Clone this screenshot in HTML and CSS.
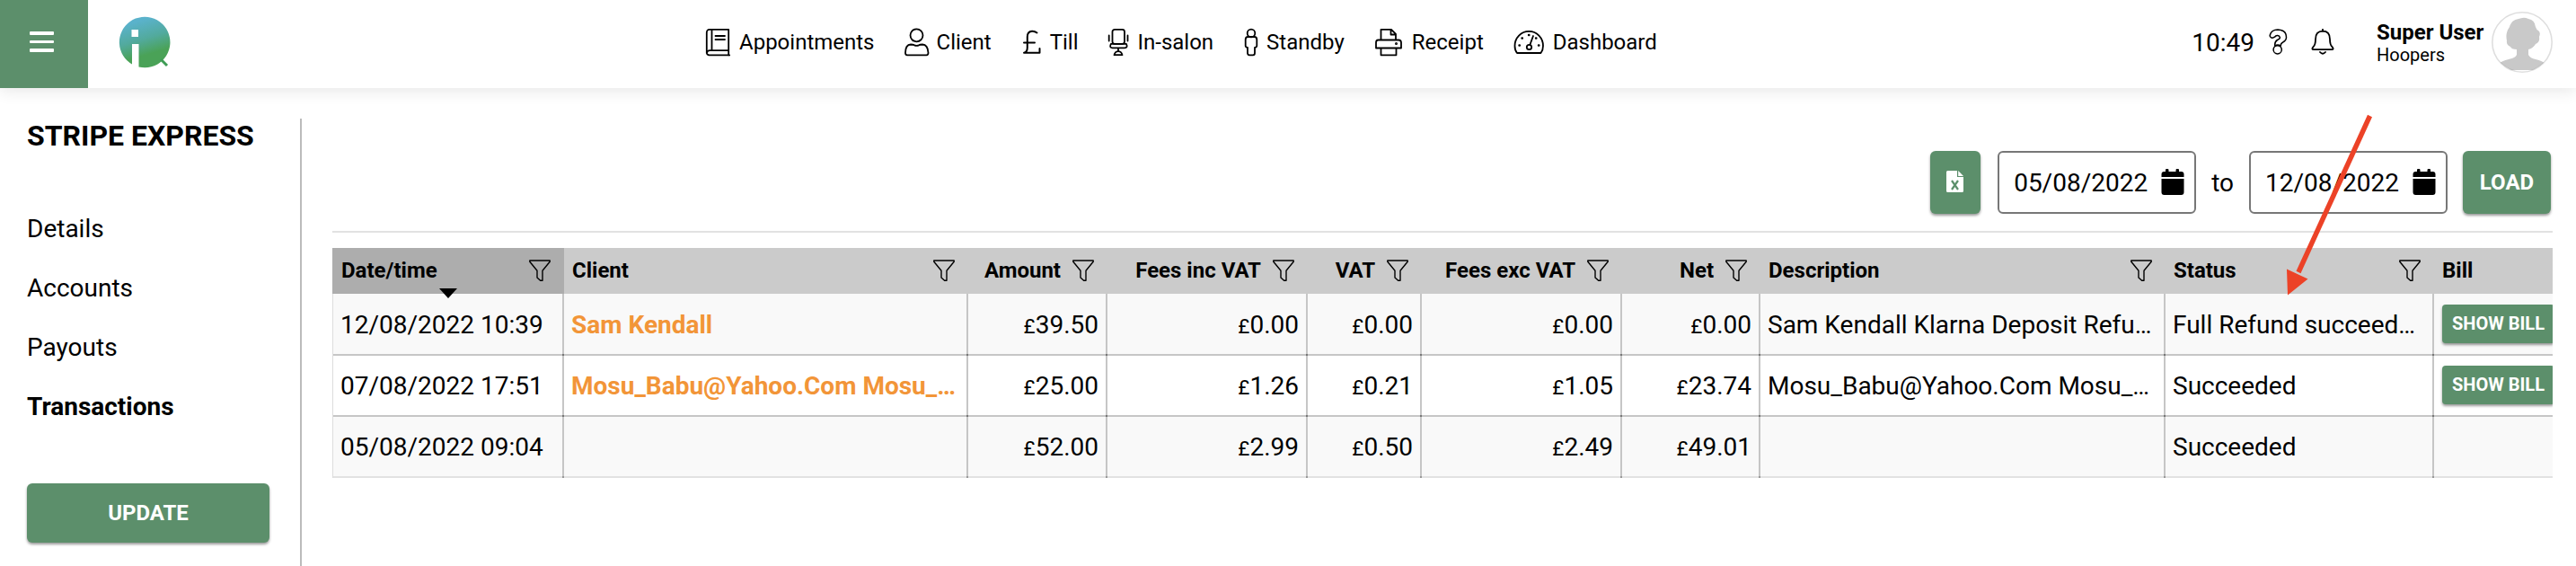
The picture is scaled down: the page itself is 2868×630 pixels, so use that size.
FILE: index.html
```html
<!DOCTYPE html>
<html lang="en">
<head>
  <meta charset="UTF-8" />
  <meta name="viewport" content="width=device-width, initial-scale=1.0"/>
  <title>Stripe Express - Transactions</title>
  <link rel="stylesheet" href="styles.css">
</head>
<body>
  <!-- shared icons -->
  <svg class="defs">
    <symbol id="filter" viewBox="0 0 24 24">
      <path d="M.8 1h22.400v1.200L15 12.200v11H12.600L9 20v-7.800L.8 2.200z" fill="none" stroke="#000" stroke-width="1.400" stroke-linejoin="round"/>
    </symbol>
    <symbol id="calendar" viewBox="0 0 26 30">
      <path d="M5 3V1.500a1.500 1.500 0 0 1 3.500 0V3h8V1.500a1.500 1.500 0 0 1 3.500 0V3h2.500q3 0 3 3v3H.5V6q0-3 3-3zM.5 11h25v15q0 3-3 3h-19q-3 0-3-3z"/>
    </symbol>
  </svg>

  <header class="topbar">
    <button class="menu"><span></span><span></span><span></span></button>
    <svg class="logo" viewBox="0 0 60 60">
      <defs>
        <linearGradient id="logoFill" x1=".3" y1="0" x2=".6" y2="1">
          <stop offset=".1" stop-color="#5ab2cb"/>
          <stop offset=".45" stop-color="#52aa9d"/>
          <stop offset=".75" stop-color="#4aa257"/>
        </linearGradient>
      </defs>
      <path d="M17 54.500A28.300 28.300 0 1 1 24.500 57.500V32H17z" fill="url(#logoFill)"/>
      <rect x="16.500" y="16" width="7.500" height="8" fill="#fff"/>
      <path d="M49 49l7 7" stroke="#3f9c55" stroke-width="3"/>
    </svg>

    <nav class="nav">
      <a><svg width="30" height="34" viewBox="0 0 30 34"><path d="M5 2.800h21.200v23.400H6a3.800 3.800 0 0 0-4.200 3V6.500Q1.800 2.800 5 2.800zM7.500 3v23M26.200 26.500v5M27.200 31.400H6q-4.200 0-4.200-3M11.500 10h10.500M11.500 14h10.500"/></svg>Appointments</a>
      <a><svg width="29" height="34" viewBox="0 0 29 34"><circle cx="14.500" cy="9.300" r="7"/><path d="M4 31.300q-2 0-2-2.500 0-9 6-9.300 3 0 4 .8 2.500 1 5 0 1-.8 4-.8 6 .3 6.500 9.300 0 2.500-2 2.500z"/></svg>Client</a>
      <a><svg width="25" height="34" viewBox="0 0 25 34"><path d="M18.500 6.500Q16 4.500 13 4.700 7.800 5 7.800 11v12q0 5-3.800 5.700h17.500V24M4 17.500h12" stroke-width="2"/></svg>Till</a>
      <a><svg width="26" height="34" viewBox="0 0 26 34"><rect x="6.500" y="2.800" width="13.500" height="16" rx="2.500"/><path d="M5 18.800h17q2 4.500-2 4.500H6.500q-4-.3-1.500-4.500zM2.700 9.500v6M23.500 9.500v6M13 23.500v3.500M8.500 31.200q1-4 4.500-4t4.500 4z"/></svg>In-salon</a>
      <a><svg width="19" height="34" viewBox="0 0 19 34"><circle cx="10" cy="7" r="4.300"/><path d="M6.500 11h7q2.800 0 2.800 3v7q0 1.500-2.300 2v6q0 2.300-2 2.300H8q-2 0-2-2.300v-6q-2.300-.5-2.300-2v-7q0-3 2.800-3z"/></svg>Standby</a>
      <a><svg width="35" height="34" viewBox="0 0 35 34"><path d="M8.500 14V2.800h11.500l5 5V14M19.500 3v5.500H25M5.500 14.500h22.500q3 0 3 3v6H3v-6q0-3 2.500-3zM8.500 24v7.300h17V24"/><circle cx="25.500" cy="18.500" r=".6"/></svg>Receipt</a>
      <a><svg width="37" height="34" viewBox="0 0 37 34"><path d="M5 29Q2.500 26 2.500 21A15.600 16 0 0 1 34 21q0 5-2.500 8zM19.500 19.500L23 10"/><circle cx="18.500" cy="22.500" r="2.700"/><path class="dots" d="M7.500 20.500h.4M10.500 12.500h.4M18 9h.4M26 12.500h.4M29 20.500h.4"/></svg>Dashboard</a>
    </nav>

    <div class="tools">
      <span class="clock">10:49</span>
      <svg class="help" width="22" height="30" viewBox="0 0 22 30"><path d="M2.300 7Q4 1 11 1q9.500.3 9.500 8.500 0 3.500-3.800 5.500-2.700 1.300-2.400 4-3.500-2-6.500 0-.6-4.500 2.700-6.500 3.200-1.300 2.900-2.900-.6-2.300-3-2.100-1.800.2-2.900 1.700Q5 11 3.200 9.500 1.900 8.500 2.300 7z"/><circle cx="10.700" cy="23.300" r="4.600"/></svg>
      <svg class="bell" width="26" height="30" viewBox="0 0 26 30"><path d="M13 .8v2M13 2.700q8 0 8 9 0 6 2.500 8.500 2.500 3-.5 3H3q-3 0-.5-3Q5 17.700 5 11.700q0-9 8-9zM10 26q3 3.500 6 0"/></svg>
      <div class="user">
        <strong>Super User</strong>
        <span>Hoopers</span>
      </div>
      <svg class="avatar" viewBox="0 0 68 68">
        <clipPath id="round"><circle cx="34" cy="34" r="33"/></clipPath>
        <path clip-path="url(#round)" fill="#c9c9c9" d="M34 7q3-1 7 1 7 1 8 9 1 3 3 4 3 2 1 7 1 6-4 8-3 5-8 6v6q2 4 8 5 8 2 11 5v7H8v-7q3-3 11-5 7-1 9-5v-6q-6 0-7-3-5-2-4-7-2-8 3-15 2-8 10-9z"/>
        <circle cx="34" cy="34" r="33.200" fill="none" stroke="#000" stroke-opacity=".13" stroke-width="1.600"/>
      </svg>
    </div>
  </header>

  <main class="page">
    <aside class="sidebar">
      <h1>STRIPE EXPRESS</h1>
      <ul>
        <li>Details</li>
        <li>Accounts</li>
        <li>Payouts</li>
        <li class="active">Transactions</li>
      </ul>
      <button class="btn update">UPDATE</button>
    </aside>

    <section class="content">
      <div class="filters">
        <button class="btn excel">
          <svg width="20" height="24" viewBox="0 0 20 24"><path fill="#fff" d="M1.500 0H12v7h7v15.500q0 1.500-1.500 1.500h-16Q0 24 0 22.500v-21Q0 0 1.500 0zM13.200 0L19 6h-5.800z"/><path d="M6 11l7 10M13 11L6 21" stroke="#5c8f6b" stroke-width="2.200"/></svg>
        </button>
        <div class="date">05/08/2022 <svg width="26" height="30"><use href="#calendar"/></svg></div>
        <span class="to">to</span>
        <div class="date">12/08/2022 <svg width="26" height="30"><use href="#calendar"/></svg></div>
        <button class="btn load">LOAD</button>
      </div>

      <table>
        <colgroup>
          <col class="c-date"><col class="c-client"><col class="c-amount"><col class="c-fees"><col class="c-vat"><col class="c-fees"><col class="c-net"><col class="c-desc"><col class="c-status"><col class="c-bill">
        </colgroup>
        <thead>
          <tr>
            <th class="sorted"><div>Date/time<svg><use href="#filter"/></svg></div></th>
            <th><div>Client<svg><use href="#filter"/></svg></div></th>
            <th class="num"><div>Amount<svg><use href="#filter"/></svg></div></th>
            <th class="num"><div>Fees inc VAT<svg><use href="#filter"/></svg></div></th>
            <th class="num"><div>VAT<svg><use href="#filter"/></svg></div></th>
            <th class="num"><div>Fees exc VAT<svg><use href="#filter"/></svg></div></th>
            <th class="num"><div>Net<svg><use href="#filter"/></svg></div></th>
            <th><div>Description<svg><use href="#filter"/></svg></div></th>
            <th><div>Status<svg><use href="#filter"/></svg></div></th>
            <th><div>Bill</div></th>
          </tr>
        </thead>
        <tbody>
          <tr>
            <td>12/08/2022 10:39</td>
            <td class="client">Sam Kendall</td>
            <td class="num"><i>£</i>39.50</td>
            <td class="num"><i>£</i>0.00</td>
            <td class="num"><i>£</i>0.00</td>
            <td class="num"><i>£</i>0.00</td>
            <td class="num"><i>£</i>0.00</td>
            <td>Sam Kendall Klarna Deposit Refu…</td>
            <td>Full Refund succeed…</td>
            <td><button class="btn bill">SHOW BILL</button></td>
          </tr>
          <tr>
            <td>07/08/2022 17:51</td>
            <td class="client">Mosu_Babu@Yahoo.Com Mosu_…</td>
            <td class="num"><i>£</i>25.00</td>
            <td class="num"><i>£</i>1.26</td>
            <td class="num"><i>£</i>0.21</td>
            <td class="num"><i>£</i>1.05</td>
            <td class="num"><i>£</i>23.74</td>
            <td>Mosu_Babu@Yahoo.Com Mosu_…</td>
            <td>Succeeded</td>
            <td><button class="btn bill">SHOW BILL</button></td>
          </tr>
          <tr>
            <td>05/08/2022 09:04</td>
            <td></td>
            <td class="num"><i>£</i>52.00</td>
            <td class="num"><i>£</i>2.99</td>
            <td class="num"><i>£</i>0.50</td>
            <td class="num"><i>£</i>2.49</td>
            <td class="num"><i>£</i>49.01</td>
            <td></td>
            <td>Succeeded</td>
            <td></td>
          </tr>
        </tbody>
      </table>
    </section>
  </main>

  <!-- arrow pointing at the refund status -->
  <svg class="arrow" viewBox="0 0 100 204">
    <path d="M93.500 4L14 178" stroke="#ec4227" stroke-width="5.500"/>
    <path d="M2 203.500L1 174.500 24.500 185.500z" fill="#ec4227"/>
  </svg>
</body>
</html>
```
FILE: styles.css
```css
* {
  box-sizing: border-box;
}
body {
  margin: 0;
  height: 630px;
  overflow: hidden;
  position: relative;
  background: #fff;
  color: #000;
  font-family: Roboto, sans-serif;
  font-size: 28px;
}
.defs {
  position: absolute;
  width: 0;
  height: 0;
}
button {
  border: none;
  padding: 0;
  font-family: inherit;
}

/* top bar */
.topbar {
  display: flex;
  height: 98px;
  box-shadow: 0 4px 16px rgba(0, 0, 0, 0.09);
}
.menu {
  width: 98px;
  height: 98px;
  padding: 0 38px 5px 33px;
  background: #5c8f6b;
  display: flex;
  flex-direction: column;
  justify-content: center;
  gap: 6px;
}
.menu span {
  height: 3.4px;
  border-radius: 1px;
  background: #fff;
}
.logo {
  width: 60px;
  height: 60px;
  margin: 17px 0 0 32px;
}
.nav {
  display: flex;
  align-items: center;
  gap: 32px;
  height: 94px;
  margin-left: 595px;
  font-size: 24px;
}
.nav a {
  display: flex;
  align-items: center;
  gap: 8px;
}
.nav svg, .help, .bell {
  fill: none;
  stroke: #000;
  stroke-width: 1.8;
  stroke-linejoin: round;
  stroke-linecap: round;
}
.nav .dots {
  stroke-width: 2.4;
}
.tools {
  display: flex;
  align-items: center;
  height: 94px;
  margin-left: auto;
  margin-right: 26px;
}
.help {
  margin-left: 15px;
  stroke-width: 1.5;
}
.bell {
  margin-left: 26px;
}
.user {
  width: 120px;
  margin-left: 47px;
  margin-right: 8px;
  padding-top: 1px;
  font-size: 20px;
  line-height: 24px;
}
.user strong {
  display: block;
  font-size: 24px;
  line-height: 26px;
  white-space: nowrap;
}
.user span {
  display: block;
}
.avatar {
  width: 68px;
  height: 68px;
}

/* layout */
.page {
  display: flex;
  padding: 34px 26px 0 30px;
}
.sidebar {
  width: 306px;
  height: 498px;
  border-right: 2px solid #bbb;
}
h1 {
  margin: 0;
  font-size: 32px;
  line-height: 38px;
}
ul {
  list-style: none;
  margin: 52px 0 0;
  padding: 0;
}
li {
  line-height: 66px;
}
li.active {
  font-weight: bold;
}
.btn {
  background: #5c8f6b;
  color: #fff;
  font-size: 24px;
  font-weight: bold;
  border-radius: 6px;
  box-shadow: 0 2px 3px rgba(0, 0, 0, 0.4);
}
.update {
  display: block;
  width: 270px;
  height: 66px;
  margin-top: 52px;
}
.content {
  width: 2472px;
  margin-left: 34px;
}

/* date filters */
.filters {
  display: flex;
  align-items: center;
  justify-content: flex-end;
  height: 127px;
  padding: 36px 2px 19px 0;
  border-bottom: 2px solid #e2e2e2;
}
.excel {
  width: 56px;
  height: 70px;
  margin-right: 19px;
}
.excel svg {
  display: block;
  margin: -2px auto 0;
}
.date {
  display: flex;
  align-items: center;
  justify-content: space-between;
  width: 221px;
  height: 70px;
  padding: 0 11px 0 16px;
  border: 2px solid #777;
  border-radius: 6px;
}
.to {
  margin: 0 17px;
}
.load {
  width: 98px;
  height: 70px;
  margin-left: 17px;
}

/* transactions */
table {
  width: 2472px;
  margin-top: 17px;
  table-layout: fixed;
  border-collapse: collapse;
}
.c-date { width: 258px; }
.c-client { width: 450px; }
.c-amount { width: 155px; }
.c-fees { width: 223px; }
.c-vat { width: 127px; }
.c-net { width: 154px; }
.c-desc { width: 451px; }
.c-status { width: 299px; }
.c-bill { width: 132px; }
th {
  position: relative;
  height: 51px;
  padding: 0 15px 2px 9px;
  background: #cbcbcb;
  box-shadow: 1px 0 0 #b6b6b6;
  font-size: 24px;
  text-align: left;
}
th div {
  display: flex;
  align-items: center;
  justify-content: space-between;
}
th.num div {
  justify-content: flex-end;
  gap: 13px;
}
th svg {
  width: 24px;
  height: 24px;
}
th:last-child {
  box-shadow: none;
}
th.sorted {
  padding-left: 10px;
  background: #adadad;
}
th.sorted::after {
  content: "";
  position: absolute;
  left: 119px;
  top: 45px;
  border: 10px solid transparent;
  border-top: 11px solid #000;
  border-bottom: 0;
}
td {
  height: 68px;
  padding: 0 8px 2px;
  white-space: nowrap;
  overflow: hidden;
  /* darker dot where the lines cross */
  background:
    linear-gradient(#777, #777) right bottom / 2px 2px no-repeat,
    linear-gradient(#c6c6c6, #c6c6c6) right / 2px 100% no-repeat,
    linear-gradient(#c6c6c6, #c6c6c6) bottom / 100% 2px no-repeat;
}
tbody tr:nth-child(odd) {
  background: #f9f9f9;
}
tbody tr:first-child td {
  height: 69px;
  padding-top: 1px;
}
tbody tr:last-child td {
  background:
    linear-gradient(#999, #999) right bottom / 2px 2px no-repeat,
    linear-gradient(#c6c6c6, #c6c6c6) right / 2px 100% no-repeat,
    linear-gradient(#e2e2e2, #e2e2e2) bottom / 100% 2px no-repeat;
}
tbody tr td:last-child {
  background:
    linear-gradient(#c6c6c6, #c6c6c6) bottom / 100% 2px no-repeat;
}
tbody tr:last-child td:last-child {
  background:
    linear-gradient(#e2e2e2, #e2e2e2) bottom / 100% 2px no-repeat;
}
td:first-child {
  padding-left: 9px;
  box-shadow: inset 1px 0 0 #ddd;
}
.num {
  text-align: right;
}
td.num {
  padding-right: 10px;
}
td i {
  font-style: normal;
  font-size: 22.500px;
}
.client {
  color: #f29538;
  font-weight: bold;
}
.bill {
  display: block;
  width: 125px;
  height: 43px;
  margin: -2px 0 0 1px;
  font-size: 20px;
  border-radius: 4px;
}

.arrow {
  position: absolute;
  left: 2545px;
  top: 125px;
  width: 100px;
  height: 204px;
}
```
